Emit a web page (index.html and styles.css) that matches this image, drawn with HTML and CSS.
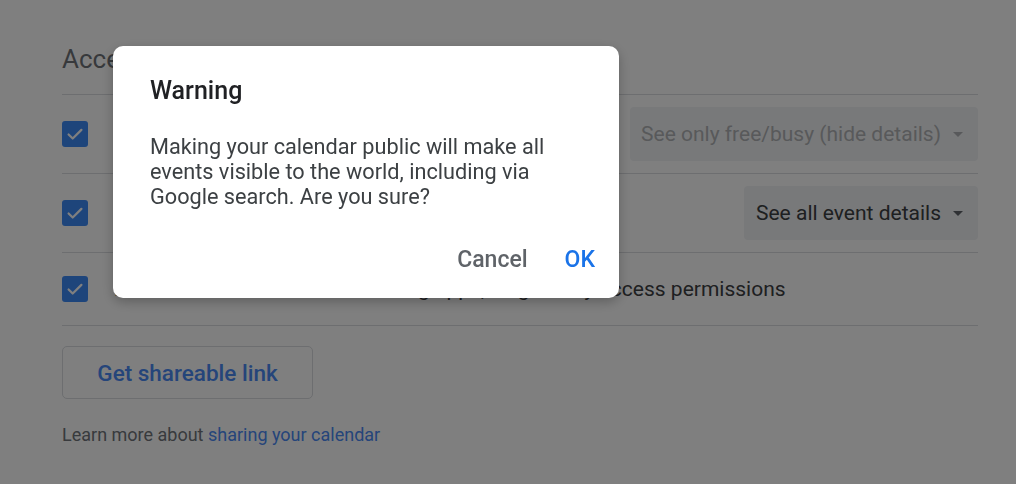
FILE: index.html
```html
<!DOCTYPE html>
<html lang="en">
<head>
<meta charset="utf-8">
<title>Access permissions</title>
<link rel="stylesheet" href="styles.css">
</head>
<body>
<main class="page">
  <h2 class="heading">Access permissions</h2>
  <ul class="rows">
    <li class="row">
      <span class="check"><svg viewBox="0 0 24 24" width="22" height="22"><path d="M5 12.5l4.5 4.5L19 7.5" fill="none" stroke="#fff" stroke-width="2.4" stroke-linecap="round" stroke-linejoin="round"/></svg></span>
      <span class="label">Make available to public</span>
      <span class="select disabled"><span>See only free/busy (hide details)</span><span class="caret"></span></span>
    </li>
    <li class="row">
      <span class="check"><svg viewBox="0 0 24 24" width="22" height="22"><path d="M5 12.5l4.5 4.5L19 7.5" fill="none" stroke="#fff" stroke-width="2.4" stroke-linecap="round" stroke-linejoin="round"/></svg></span>
      <span class="label">Make available for your organization</span>
      <span class="select"><span>See all event details</span><span class="caret"></span></span>
    </li>
    <li class="row short">
      <span class="check"><svg viewBox="0 0 24 24" width="22" height="22"><path d="M5 12.5l4.5 4.5L19 7.5" fill="none" stroke="#fff" stroke-width="2.4" stroke-linecap="round" stroke-linejoin="round"/></svg></span>
      <span class="label">Let others find this calendar using apps, as given by access permissions</span>
    </li>
  </ul>
  <button class="share">Get shareable link</button>
  <p class="learn">Learn more about <a href="#">sharing your calendar</a></p>
</main>

<div class="scrim"></div>

<div class="dialog" role="dialog">
  <h3 class="dialog-title">Warning</h3>
  <p class="dialog-body">Making your calendar public will make all events visible to the world, including via Google search. Are you sure?</p>
  <div class="dialog-actions">
    <button class="btn cancel">Cancel</button>
    <button class="btn ok">OK</button>
  </div>
</div>
</body>
</html>
```

FILE: styles.css
```css
* { box-sizing: border-box; }
html, body {
  margin: 0;
  padding: 0;
  background: #ffffff;
  font-family: Roboto, "Liberation Sans", Arial, sans-serif;
  overflow: hidden;
}
.page {
  width: 916px;
  margin-left: 62px;
  padding-top: 40px;
}
.heading {
  margin: 0;
  height: 54px;
  font-size: 26px;
  line-height: 38px;
  font-weight: 400;
  color: #6f7378;
}
.rows {
  list-style: none;
  margin: 0;
  padding: 0;
  border-top: 1px solid #dadce0;
}
.row {
  display: flex;
  align-items: center;
  padding: 12px 0;
  border-bottom: 1px solid #dadce0;
  min-height: 79px;
}
.row.short { min-height: 73px; }
.check {
  width: 26px;
  height: 26px;
  border-radius: 3px;
  background: #3d8af7;
  display: flex;
  align-items: center;
  justify-content: center;
  flex: none;
}
.label {
  margin-left: 26px;
  font-size: 21px;
  color: #3c4043;
  flex: 1;
  white-space: nowrap;
}
.select {
  display: flex;
  align-items: center;
  gap: 12px;
  height: 54px;
  padding: 0 15px 0 12px;
  background: #f1f3f4;
  border-radius: 4px;
  font-size: 21px;
  color: #3c4043;
}
.select.disabled { color: #b1b3b6; padding-left: 11px; }
.caret {
  width: 0;
  height: 0;
  border-left: 5px solid transparent;
  border-right: 5px solid transparent;
  border-top: 5px solid #5f6368;
}
.select.disabled .caret { border-top-color: #b1b3b6; }
.share {
  margin-top: 20px;
  width: 251px;
  height: 53px;
  background: #ffffff;
  border: 1px solid #dadce0;
  border-radius: 5px;
  font-family: Roboto, "Liberation Sans", Arial, sans-serif;
  font-size: 22.5px;
  font-weight: 500;
  color: #4a8af4;
  padding: 0;
}
.learn {
  margin: 24px 0 0;
  font-size: 18px;
  line-height: 24px;
  color: #70757a;
}
.learn a { color: #4a8af4; text-decoration: none; }

.scrim {
  position: fixed;
  inset: 0;
  background: rgba(0, 0, 0, 0.5);
}
.dialog {
  position: fixed;
  left: 113px;
  top: 46px;
  width: 506px;
  height: 252px;
  background: #ffffff;
  border-radius: 10px;
  box-shadow: 0 4px 12px rgba(0, 0, 0, 0.25);
  padding: 31px 16px 21px 37px;
  display: flex;
  flex-direction: column;
}
.dialog-title {
  margin: 0;
  font-size: 25px;
  line-height: 28px;
  font-weight: 500;
  color: #202124;
}
.dialog-body {
  margin: 29px 0 0;
  font-size: 21.7px;
  line-height: 25px;
  color: #3c4043;
  width: 430px;
}
.dialog-actions {
  margin-top: auto;
  display: flex;
  justify-content: flex-end;
  gap: 21px;
}
.btn {
  background: none;
  border: none;
  height: 36px;
  padding: 0 8px;
  font-family: Roboto, "Liberation Sans", Arial, sans-serif;
  font-size: 23px;
  font-weight: 500;
}
.cancel { color: #5f6368; }
.ok { color: #1a73e8; }
```
